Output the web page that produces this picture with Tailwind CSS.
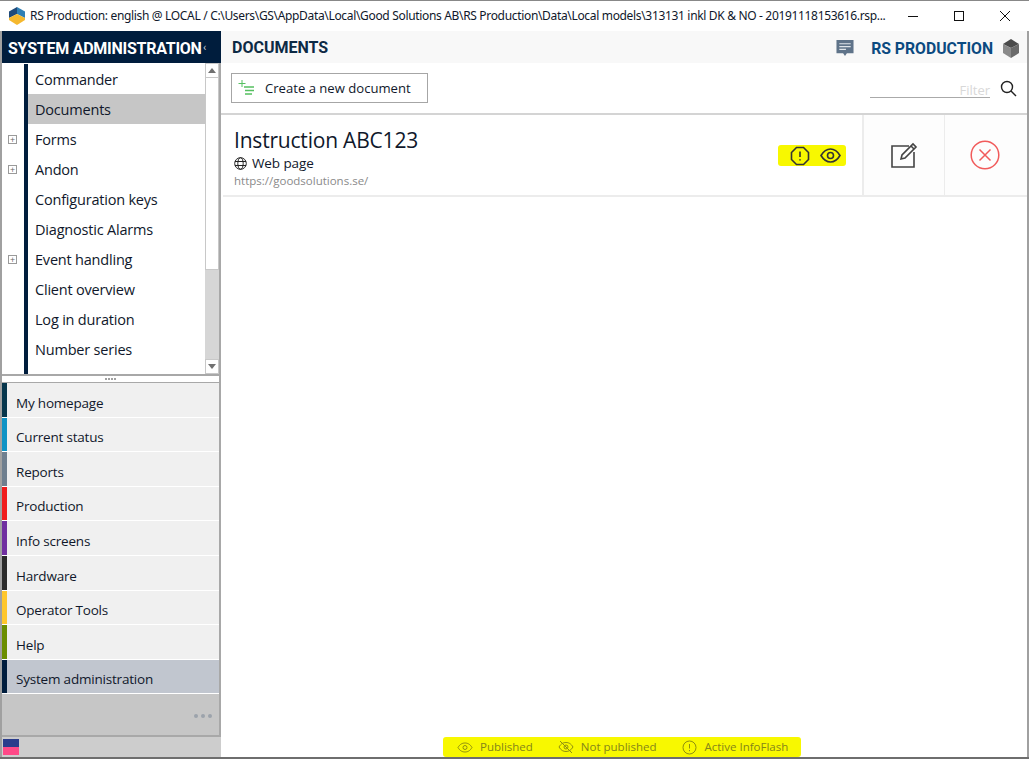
<!DOCTYPE html>
<html lang="en">
<head>
    <meta charset="UTF-8">
    <title>RS Production</title>
    <script src="https://cdn.jsdelivr.net/npm/@tailwindcss/browser@4"></script>
</head>
<body class="bg-white w-[1029px] h-[763px] overflow-hidden font-['Open_Sans','Noto_Sans',sans-serif] text-[#10182b]">
    <!-- Title bar -->
    <div class="flex items-center h-[31px] pl-[9px] pr-[1px] border-t border-[#888]">
        <svg class="w-[16px] h-[18px] shrink-0" viewBox="0 0 16 18">
            <path d="M8 0 0 4.5V11L8 7Z" fill="#1f4a7a"/>
            <path d="M8 0 16 4.5V11L8 7Z" fill="#2e7fb5"/>
            <path d="M0 11 8 7 16 11V13L8 18 0 13Z" fill="#f5b82e"/>
        </svg>
        <div class="ml-[5px] text-[12px] w-[860px] whitespace-nowrap font-['Noto_Sans',sans-serif] tracking-[-0.33px]">RS Production: english @ LOCAL / C:\Users\GS\AppData\Local\Good Solutions AB\RS Production\Data\Local models\313131 inkl DK &amp; NO - 20191118153616.rsp...</div>
        <div class="flex ml-auto items-center">
            <svg class="w-[46px] h-[30px]" viewBox="0 0 46 30"><path d="M18 15.5H28" stroke="#111" fill="none"/></svg>
            <svg class="w-[46px] h-[30px]" viewBox="0 0 46 30"><rect x="18.5" y="10.5" width="9" height="9" stroke="#111" fill="none"/></svg>
            <svg class="w-[46px] h-[30px]" viewBox="0 0 46 30"><path d="M18 10 28 20M28 10 18 20" stroke="#111" fill="none"/></svg>
        </div>
    </div>

    <div class="flex h-[728px] border-b-2 border-[#6e6e6e]">
        <!-- Sidebar -->
        <aside class="w-[221px] shrink-0 flex flex-col border-l-2 border-[#a0a0a0] bg-[#cdcdcd]">
            <div class="h-[32px] bg-[#001d3d] text-white font-['Roboto',sans-serif] font-bold text-[16px] leading-[36px] pl-[6px] relative whitespace-nowrap tracking-[-0.25px]">
                SYSTEM ADMINISTRATION
                <span class="absolute left-[201px] top-[-1px] text-[11px] font-normal text-[#cfd6de]">‹</span>
            </div>

            <!-- Tree -->
            <div class="h-[313px] flex bg-white border-r-2 border-[#a8a8a8] border-b-2">
                <div class="w-[203px] pt-[1px] text-[14.5px] tracking-[-0.2px]">
                    <div class="flex flex-col">
                        <div class="flex items-center h-[30px]"><span class="w-[22px]"></span><span class="w-[4px] h-full bg-[#001d3d]"></span><span class="pl-[7px] pt-[2px]">Commander</span></div>
                        <div class="flex items-center h-[30px]"><span class="w-[22px]"></span><span class="w-[4px] h-full bg-[#001d3d]"></span><span class="pl-[7px] pt-[2px] flex-1 h-full flex items-center bg-[#c6c6c6]">Documents</span></div>
                        <div class="flex items-center h-[30px]"><span class="w-[22px] pl-[6px]"><span class="block w-[9px] h-[9px] border border-[#9a9a9a] text-[#666] text-[9px] leading-[7px] text-center">+</span></span><span class="w-[4px] h-full bg-[#001d3d]"></span><span class="pl-[7px] pt-[2px]">Forms</span></div>
                        <div class="flex items-center h-[30px]"><span class="w-[22px] pl-[6px]"><span class="block w-[9px] h-[9px] border border-[#9a9a9a] text-[#666] text-[9px] leading-[7px] text-center">+</span></span><span class="w-[4px] h-full bg-[#001d3d]"></span><span class="pl-[7px] pt-[2px]">Andon</span></div>
                        <div class="flex items-center h-[30px]"><span class="w-[22px]"></span><span class="w-[4px] h-full bg-[#001d3d]"></span><span class="pl-[7px] pt-[2px]">Configuration keys</span></div>
                        <div class="flex items-center h-[30px]"><span class="w-[22px]"></span><span class="w-[4px] h-full bg-[#001d3d]"></span><span class="pl-[7px] pt-[2px]">Diagnostic Alarms</span></div>
                        <div class="flex items-center h-[30px]"><span class="w-[22px] pl-[6px]"><span class="block w-[9px] h-[9px] border border-[#9a9a9a] text-[#666] text-[9px] leading-[7px] text-center">+</span></span><span class="w-[4px] h-full bg-[#001d3d]"></span><span class="pl-[7px] pt-[2px]">Event handling</span></div>
                        <div class="flex items-center h-[30px]"><span class="w-[22px]"></span><span class="w-[4px] h-full bg-[#001d3d]"></span><span class="pl-[7px] pt-[2px]">Client overview</span></div>
                        <div class="flex items-center h-[30px]"><span class="w-[22px]"></span><span class="w-[4px] h-full bg-[#001d3d]"></span><span class="pl-[7px] pt-[2px]">Log in duration</span></div>
                        <div class="flex items-center h-[30px]"><span class="w-[22px]"></span><span class="w-[4px] h-full bg-[#001d3d]"></span><span class="pl-[7px] pt-[2px]">Number series</span></div>
                        <div class="h-[10px] flex"><span class="w-[22px]"></span><span class="w-[4px] h-full bg-[#001d3d]"></span></div>
                    </div>
                </div>
                <!-- Scrollbar -->
                <div class="w-[14px] flex flex-col bg-[#d6d6d6]">
                    <div class="h-[15px] bg-white border border-[#c8c8c8] flex items-center justify-center"><span class="w-0 h-0 border-x-[4px] border-x-transparent border-b-[5px] border-b-[#707070]"></span></div>
                    <div class="h-[192px] bg-white border-x border-b border-[#c8c8c8]"></div>
                    <div class="flex-1"></div>
                    <div class="h-[15px] bg-white border border-[#c8c8c8] flex items-center justify-center"><span class="w-0 h-0 border-x-[4px] border-x-transparent border-t-[5px] border-t-[#707070]"></span></div>
                </div>
            </div>

            <!-- Splitter -->
            <div class="h-[7px] bg-white border-r-2 border-b border-[#a8a8a8] flex items-center justify-center gap-[1px]">
                <span class="w-[2px] h-[2px] bg-[#a0a0a0]"></span><span class="w-[2px] h-[2px] bg-[#a0a0a0]"></span><span class="w-[2px] h-[2px] bg-[#a0a0a0]"></span><span class="w-[2px] h-[2px] bg-[#a0a0a0]"></span>
            </div>

            <!-- Module list -->
            <div class="flex-1 flex flex-col bg-[#c6c6c6] border-r-2 border-b-2 border-[#a8a8a8] text-[13.5px] tracking-[-0.2px]">
                <div class="flex h-[34.6px] bg-[#f0f0f0] border-b border-white items-center"><span class="w-[5px] h-full bg-[#06364c]"></span><span class="pl-[9px] pt-[6px]">My homepage</span></div>
                <div class="flex h-[34.6px] bg-[#f0f0f0] border-b border-white items-center"><span class="w-[5px] h-full bg-[#0f93c5]"></span><span class="pl-[9px] pt-[6px]">Current status</span></div>
                <div class="flex h-[34.6px] bg-[#f0f0f0] border-b border-white items-center"><span class="w-[5px] h-full bg-[#6f7f8f]"></span><span class="pl-[9px] pt-[6px]">Reports</span></div>
                <div class="flex h-[34.6px] bg-[#f0f0f0] border-b border-white items-center"><span class="w-[5px] h-full bg-[#f01c1c]"></span><span class="pl-[9px] pt-[6px]">Production</span></div>
                <div class="flex h-[34.6px] bg-[#f0f0f0] border-b border-white items-center"><span class="w-[5px] h-full bg-[#7030a0]"></span><span class="pl-[9px] pt-[6px]">Info screens</span></div>
                <div class="flex h-[34.6px] bg-[#f0f0f0] border-b border-white items-center"><span class="w-[5px] h-full bg-[#2b2b2b]"></span><span class="pl-[9px] pt-[6px]">Hardware</span></div>
                <div class="flex h-[34.6px] bg-[#f0f0f0] border-b border-white items-center"><span class="w-[5px] h-full bg-[#ffc72c]"></span><span class="pl-[9px] pt-[6px]">Operator Tools</span></div>
                <div class="flex h-[34.6px] bg-[#f0f0f0] border-b border-white items-center"><span class="w-[5px] h-full bg-[#6b8e00]"></span><span class="pl-[9px] pt-[6px]">Help</span></div>
                <div class="flex h-[34.6px] bg-[#c1c6cf] border-b border-white items-center"><span class="w-[5px] h-full bg-[#001d3d]"></span><span class="pl-[9px] pt-[6px]">System administration</span></div>
                <div class="flex-1 flex items-center justify-end pr-[7px] gap-[3px] pt-[3px]">
                    <span class="w-[4px] h-[4px] rounded-full bg-[#9ca3ac]"></span><span class="w-[4px] h-[4px] rounded-full bg-[#9ca3ac]"></span><span class="w-[4px] h-[4px] rounded-full bg-[#9ca3ac]"></span>
                </div>
            </div>

            <!-- Status strip -->
            <div class="h-[20px] shrink-0 pl-[1px] pt-[1px]">
                <div class="w-[16px] h-[8px] mt-[1px] bg-[#2b3d8c]"></div>
                <div class="w-[16px] h-[8px] bg-[#ff4a88]"></div>
            </div>
        </aside>

        <!-- Main -->
        <main class="flex-1 flex flex-col border-r-2 border-[#a0a0a0] min-w-0">
            <div class="flex items-center h-[32px] bg-[#f8f8f8] pl-[11px] pr-[8px] pt-[2px]">
                <span class="font-['Roboto',sans-serif] font-bold text-[16px] text-[#0d2a45]">DOCUMENTS</span>
                <svg class="ml-auto w-[18px] h-[18px]" viewBox="0 0 18 19">
                    <path d="M0 1H18V15H11L9 18 7 15H0Z" fill="#5f7389"/>
                    <path d="M3 5H15M3 8H15M3 11H10" stroke="#dfe5ea" stroke-width="1.2"/>
                </svg>
                <span class="ml-[17px] pt-[1px] font-['Roboto',sans-serif] font-bold text-[15.75px] text-[#0b4a80]">RS PRODUCTION</span>
                <svg class="ml-[10px] w-[16px] h-[19px]" viewBox="0 0 16 19">
                    <path d="M8 0 16 5 8 9 0 5Z" fill="#4a4a4a"/>
                    <path d="M0 5 8 9V19L0 14Z" fill="#8a8a8a"/>
                    <path d="M16 5V14L8 19V9Z" fill="#6a6a6a"/>
                </svg>
            </div>

            <!-- Toolbar -->
            <div class="flex items-center h-[52px] border-b-2 border-[#d4d4d4] pl-[10px] pr-[10px]">
                <button class="flex items-center h-[30px] w-[197px] border border-[#a6a6a6] pl-[6px] text-[13.1px]">
                    <svg class="w-[16px] h-[16px]" viewBox="0 0 16 16" fill="none" stroke="#55c060" stroke-width="1.6">
                        <path d="M4 0V7M0.5 3.5H7.5" stroke-width="1"/><path d="M6 7H16M7 10.5H16M7 14H14"/>
                    </svg>
                    <span class="ml-[11px] pt-[2px]">Create a new document</span>
                </button>
                <div class="ml-auto flex items-center">
                    <div class="w-[120px] h-[20px] border-b border-[#aaaaaa] text-right text-[13px] leading-[24px] text-[#d8d8d8]">Filter</div>
                    <svg class="ml-[10px] w-[17px] h-[17px]" viewBox="0 0 17 17" fill="none" stroke="#222" stroke-width="1.4">
                        <circle cx="7" cy="7" r="5.5"/><path d="M11 11 16 16"/>
                    </svg>
                </div>
            </div>

            <!-- Document row -->
            <div class="flex h-[82px] border-b-2 border-[#ececec] ml-[2px]">
                <div class="flex-1 pl-[11px] pt-[11px] relative">
                    <div class="text-[21px] leading-[28px] tracking-[-0.2px]">Instruction ABC123</div>
                    <div class="flex items-center h-[18px] text-[13.5px] tracking-[-0.1px]">
                        <svg class="w-[13px] h-[13px] mr-[5px]" viewBox="0 0 13 13" fill="none" stroke="#222" stroke-width="1">
                            <circle cx="6.5" cy="6.5" r="5.8"/><ellipse cx="6.5" cy="6.5" rx="2.7" ry="5.8"/><path d="M1 4.5H12M1 8.5H12"/>
                        </svg>
                        Web page
                    </div>
                    <div class="text-[11.5px] leading-[17px] text-[#8a8a8a]">https://goodsolutions.se/</div>
                    <div class="absolute left-[555px] top-[30px] w-[68px] h-[21px] bg-[#f8f800] flex items-center rounded-[3px] pl-[12px] gap-[10px]">
                        <svg class="w-[20px] h-[20px]" viewBox="0 0 20 20" fill="none" stroke="#333" stroke-width="1.6">
                            <path d="M6.5 1.5H13.5L18.5 6.5V13.5L13.5 18.5H6.5L1.5 13.5V6.5Z"/><path d="M10 5.5V11M10 13.2V14.6"/>
                        </svg>
                        <svg class="w-[21px] h-[15px]" viewBox="0 0 21 15" fill="none" stroke="#333" stroke-width="1.6">
                            <path d="M1 7.5C4 2.5 7 1 10.5 1S17 2.5 20 7.5C17 12.5 14 14 10.5 14S4 12.5 1 7.5Z"/><circle cx="10.5" cy="7.5" r="3"/>
                        </svg>
                    </div>
                </div>
                <div class="w-[82px] bg-[#fdfdfd] border-l-2 border-[#ececec] flex items-center justify-center">
                    <svg class="w-[28px] h-[28px]" viewBox="0 0 28 28" fill="none" stroke="#444" stroke-width="1.6">
                        <path d="M19 5H2V26H24V11"/><path d="M11 18 12 14 23 3 26 6 15 17Z"/><path d="M21 5 24 8"/>
                    </svg>
                </div>
                <div class="w-[83px] bg-[#fdfdfd] border-l border-[#ececec] flex items-center justify-center pr-[2px]">
                    <svg class="w-[30px] h-[30px]" viewBox="0 0 30 30" fill="none" stroke="#f15b5b" stroke-width="1.5">
                        <circle cx="15" cy="15" r="13.8"/><path d="M9.5 9.5 20.5 20.5M20.5 9.5 9.5 20.5"/>
                    </svg>
                </div>
            </div>

            <div class="flex-1"></div>

            <!-- Legend -->
            <div class="h-[20px] flex items-center pl-[222px] text-[11.5px] text-[#85851a] whitespace-nowrap">
                <div class="flex items-center h-[20px] w-[358px] bg-[#f8f800] rounded-[3px] pl-[14px]">
                    <svg class="w-[16px] h-[11px] shrink-0" viewBox="0 0 16 11" fill="none" stroke="#8f8f10"><path d="M1 5.5C3 2 5.5 1 8 1S13 2 15 5.5C13 9 10.5 10 8 10S3 9 1 5.5Z"/><circle cx="8" cy="5.5" r="2"/></svg>
                    <span class="ml-[7px]">Published</span>
                    <svg class="ml-[25px] w-[16px] h-[14px] shrink-0" viewBox="0 0 16 14" fill="none" stroke="#8f8f10"><path d="M1 7C3 3.5 5.5 2.5 8 2.5S13 3.5 15 7C13 10.5 10.5 11.5 8 11.5S3 10.5 1 7Z"/><circle cx="8" cy="7" r="2"/><path d="M2 1 14 13"/></svg>
                    <span class="ml-[7px]">Not published</span>
                    <svg class="ml-[26px] w-[15px] h-[15px] shrink-0" viewBox="0 0 15 15" fill="none" stroke="#8f8f10"><circle cx="7.5" cy="7.5" r="6.5"/><path d="M7.5 4V8.5M7.5 10V11.2"/></svg>
                    <span class="ml-[7px]">Active InfoFlash</span>
                </div>
            </div>
        </main>
    </div>
</body>
</html>
